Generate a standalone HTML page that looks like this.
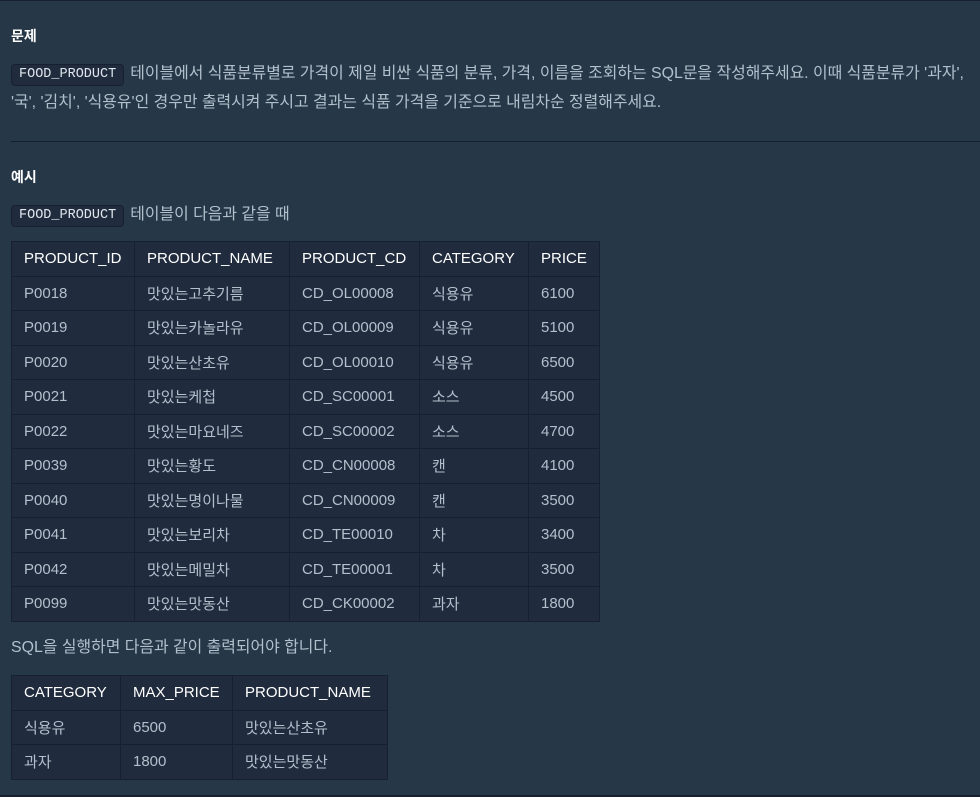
<!DOCTYPE html>
<html><head><meta charset="utf-8"><style>
html,body{margin:0;padding:0;}
body{width:980px;height:797px;background:#263747;font-family:"Liberation Sans","Noto Sans CJK KR",sans-serif;color:#b2c0cc;font-size:15px;position:relative;overflow:hidden;}
.top{position:absolute;left:0;top:0;width:980px;height:1px;background:#172030;}
.bot{position:absolute;left:0;top:795px;width:980px;height:2px;background:#172030;}
.h{position:absolute;left:11px;color:#fff;font-weight:bold;font-size:14px;}
.p{position:absolute;left:11px;line-height:29px;white-space:nowrap;font-size:15.9px;}
code{display:inline-block;background:#202b3d;border:1px solid #172030;border-radius:4px;color:#dfe6ec;font-family:"Liberation Mono",monospace;font-size:13.5px;height:20px;line-height:20px;padding:0 7px;margin-right:6px;vertical-align:1px;}
.hr{position:absolute;left:11px;right:0;top:141px;height:1px;background:#172030;}
table{position:absolute;left:11px;border-collapse:collapse;background:#202b3d;}
td,th{border:1px solid #172030;height:33.5px;padding:0 12px;text-align:left;font-weight:normal;font-size:15px;white-space:nowrap;}
th{color:#fff;}
</style></head><body>
<div class="top"></div>
<div class="h" style="top:26px">문제</div>
<div class="p" style="top:59px"><code>FOOD_PRODUCT</code>테이블에서 식품분류별로 가격이 제일 비싼 식품의 분류, 가격, 이름을 조회하는 SQL문을 작성해주세요. 이때 식품분류가 '과자',<br>'국', '김치', '식용유'인 경우만 출력시켜 주시고 결과는 식품 가격을 기준으로 내림차순 정렬해주세요.</div>
<div class="hr"></div>
<div class="h" style="top:167px">예시</div>
<div class="p" style="top:200px"><code>FOOD_PRODUCT</code>테이블이 다음과 같을 때</div>
<table style="top:241px">
<tr><th style="width:98px">PRODUCT_ID</th><th style="width:130px">PRODUCT_NAME</th><th style="width:105px">PRODUCT_CD</th><th style="width:84px">CATEGORY</th><th style="width:45px">PRICE</th></tr>
<tr><td>P0018</td><td>맛있는고추기름</td><td>CD_OL00008</td><td>식용유</td><td>6100</td></tr>
<tr><td>P0019</td><td>맛있는카놀라유</td><td>CD_OL00009</td><td>식용유</td><td>5100</td></tr>
<tr><td>P0020</td><td>맛있는산초유</td><td>CD_OL00010</td><td>식용유</td><td>6500</td></tr>
<tr><td>P0021</td><td>맛있는케첩</td><td>CD_SC00001</td><td>소스</td><td>4500</td></tr>
<tr><td>P0022</td><td>맛있는마요네즈</td><td>CD_SC00002</td><td>소스</td><td>4700</td></tr>
<tr><td>P0039</td><td>맛있는황도</td><td>CD_CN00008</td><td>캔</td><td>4100</td></tr>
<tr><td>P0040</td><td>맛있는명이나물</td><td>CD_CN00009</td><td>캔</td><td>3500</td></tr>
<tr><td>P0041</td><td>맛있는보리차</td><td>CD_TE00010</td><td>차</td><td>3400</td></tr>
<tr><td>P0042</td><td>맛있는메밀차</td><td>CD_TE00001</td><td>차</td><td>3500</td></tr>
<tr><td>P0099</td><td>맛있는맛동산</td><td>CD_CK00002</td><td>과자</td><td>1800</td></tr>
</table>
<div class="p" style="top:633px">SQL을 실행하면 다음과 같이 출력되어야 합니다.</div>
<table style="top:675px">
<tr><th style="width:84px">CATEGORY</th><th style="width:87px">MAX_PRICE</th><th style="width:130px">PRODUCT_NAME</th></tr>
<tr><td>식용유</td><td>6500</td><td>맛있는산초유</td></tr>
<tr><td>과자</td><td>1800</td><td>맛있는맛동산</td></tr>
</table>
<div class="bot"></div>
</body></html>
